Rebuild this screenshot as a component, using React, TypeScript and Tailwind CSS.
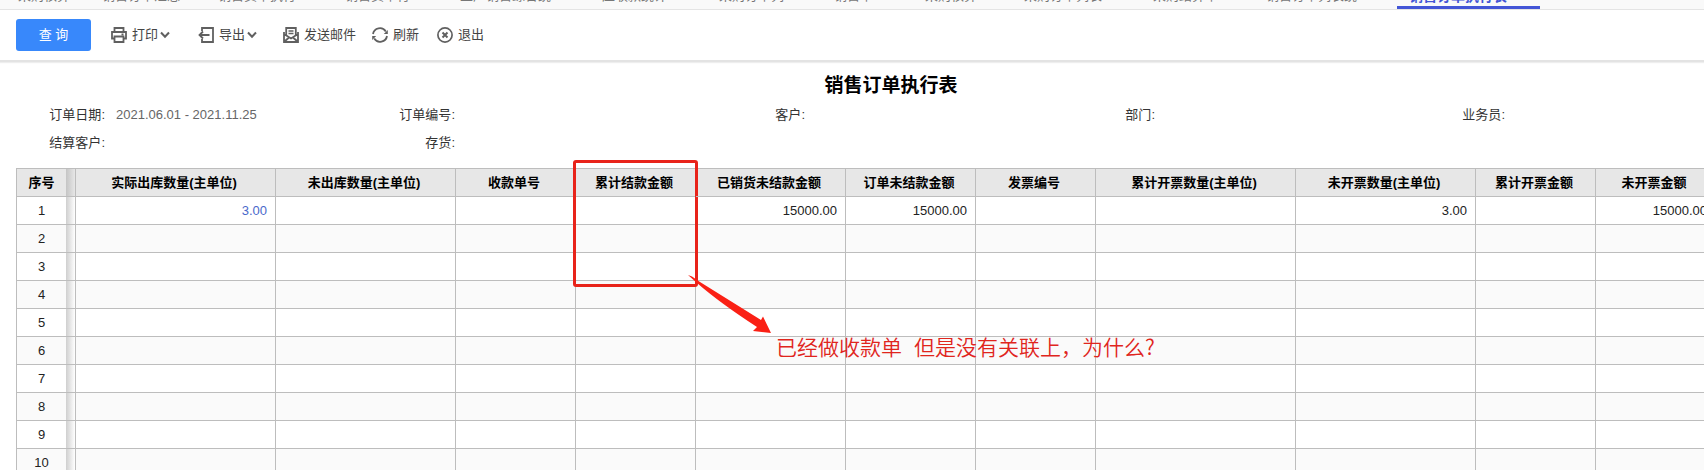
import React from "react";

const tabs = [
  { name: "采购核算 1", width: "w-[84px]" },
  { name: "销售订单汇总", width: "w-[116px]" },
  { name: "销售货单执行", width: "w-[127px]" },
  { name: "销售货单行", width: "w-[115px]" },
  { name: "生产销售综合统", width: "w-[142px]" },
  { name: "应收款统计", width: "w-[117px]" },
  { name: "采购订单列", width: "w-[115px]" },
  { name: "销售单", width: "w-[91px]" },
  { name: "采购核算", width: "w-[99px]" },
  { name: "采购订单列表", width: "w-[129px]" },
  { name: "采购结算单", width: "w-[113px]" },
  { name: "销售订单列表统", width: "w-[131px]" },
];

const columns = [
  { title: "实际出库数量(主单位)", width: "w-[200px]", value: "3.00", link: true },
  { title: "未出库数量(主单位)", width: "w-[180px]" },
  { title: "收款单号", width: "w-[120px]" },
  { title: "累计结款金额", width: "w-[120px]", marked: true },
  { title: "已销货未结款金额", width: "w-[150px]", value: "15000.00" },
  { title: "订单未结款金额", width: "w-[130px]", value: "15000.00" },
  { title: "发票编号", width: "w-[120px]" },
  { title: "累计开票数量(主单位)", width: "w-[200px]" },
  { title: "未开票数量(主单位)", width: "w-[180px]", value: "3.00" },
  { title: "累计开票金额", width: "w-[120px]" },
  { title: "未开票金额", width: "w-[120px]", value: "15000.00" },
];

const rows = [1, 2, 3, 4, 5, 6, 7, 8, 9, 10];

const Icon: React.FC<{ children: React.ReactNode }> = ({ children }) => (
  <svg viewBox="0 0 16 16" className="size-4 shrink-0" fill="none" stroke="#606060" strokeWidth="1.8">
    {children}
  </svg>
);

const Chevron = () => (
  <svg viewBox="0 0 10 8" className="ml-[2px] h-2 w-[10px]" fill="none" stroke="#606060" strokeWidth="2">
    <path d="M1 1.5 5 5.8 9 1.5" />
  </svg>
);

const ToolButton: React.FC<{ label: string; icon: React.ReactNode; menu?: boolean }> = ({ label, icon, menu }) => (
  <button className="flex items-center text-[#444]">
    <Icon>{icon}</Icon>
    <span className="ml-[5px]">{label}</span>
    {menu && <Chevron />}
  </button>
);

const Field: React.FC<{ label: string; value?: string }> = ({ label, value }) => (
  <div className="flex">
    <dt className="w-[90px] shrink-0 text-right text-[#333]">{label}:</dt>
    <dd className="ml-[11px] whitespace-nowrap text-[#666]">{value}</dd>
  </div>
);

// red box around the column, with the arrow and the question next to it
const Note = () => (
  <div className="pointer-events-none absolute -left-[3px] -top-[9px] h-[127px] w-[125px] rounded-[3px] border-3 border-[#e8231a]">
    <svg viewBox="0 0 84 60" className="absolute left-[112px] top-[112px] h-[60px] w-[84px]" fill="#fa2015">
      <path d="M0 0 L4 1.5 L12 7 L73 45 L75 41.5 L83 58 L65 56 L69 52 Q32 28 9 8 Z" />
    </svg>
    <p className="absolute left-[200px] top-[167px] flex gap-3 whitespace-nowrap font-['Noto_Sans_CJK_SC',sans-serif] text-[21px] leading-8 font-[350] text-[#e0251d]">
      <span>已经做收款单</span>
      <span>但是没有关联上，为什么?</span>
    </p>
  </div>
);

export default function App() {
  return (
    <div className="h-screen overflow-hidden bg-white font-['Liberation_Sans','Noto_Sans_CJK_SC',sans-serif] text-[13px] text-[#222]">
      <nav className="flex h-[10px] items-end overflow-hidden border-b border-[#e4e4e4] bg-[#f9f9f9] pl-[18px] leading-5 text-[#777]">
        {tabs.map((tab) => (
          <a key={tab.name} href="#" className={`${tab.width} shrink-0 whitespace-nowrap pb-[3px]`}>
            {tab.name}
          </a>
        ))}
        <a href="#" className="w-[143px] shrink-0 border-b-3 border-[#4355d6] pl-3 text-sm font-bold text-[#4355d6]">
          销售订单执行表
        </a>
      </nav>

      <header className="flex h-[52px] items-center border-b-2 border-[#e3e3e3] pl-4 pb-[1px] shadow-[0_1px_1px_#eeeeee]">
        <button className="h-8 w-[75px] rounded-[3px] bg-[#3888fb] text-white">查 询</button>
        <div className="ml-5 flex items-center">
          <div className="w-[87px]">
            <ToolButton
              label="打印"
              menu
              icon={<path d="M3.5 5V1h9v4M3.5 11.5H1V5h14v6.5h-2.5M3.5 9.5h9V15h-9zM10.5 7.3h2" />}
            />
          </div>
          <div className="w-[85px]">
            <ToolButton label="导出" menu icon={<path d="M4 4V1h11v14H4v-3M11.5 8H1.5M5 4.5 1.5 8 5 11.5" />} />
          </div>
          <div className="w-[89px]">
            <ToolButton
              label="发送邮件"
              icon={
                <>
                  <path d="M3.2 9V1h9.6v8" />
                  <path d="M1 5v10h14V5M1 7l7 4.5L15 7M1.5 14.5l4.5-4M14.5 14.5l-4.5-4" />
                  <path d="M5.5 4h5M5.5 6.5h5" strokeWidth="1.3" />
                </>
              }
            />
          </div>
          <div className="w-[65px]">
            <ToolButton
              label="刷新"
              icon={
                <>
                  <path d="M1 7a7 7 0 0 1 12.8-2.6M15 9a7 7 0 0 1-12.8 2.6" />
                  <path d="M15.8 3v4h-4zM.2 13V9h4z" fill="#606060" stroke="none" />
                </>
              }
            />
          </div>
          <ToolButton
            label="退出"
            icon={
              <>
                <circle cx="8" cy="8" r="7.1" strokeWidth="1.7" />
                <path d="m5.5 5.5 5 5M10.5 5.5l-5 5" strokeWidth="2" />
              </>
            }
          />
        </div>
      </header>

      <main>
        <h1 className="pt-[9px] pl-[78px] text-center text-[19px] leading-[30px] font-bold text-black">销售订单执行表</h1>
        <dl className="grid grid-cols-[350px_350px_350px_350px_1fr] pl-[15px] leading-7">
          <Field label="订单日期" value="2021.06.01 - 2021.11.25" />
          <Field label="订单编号" />
          <Field label="客户" />
          <Field label="部门" />
          <Field label="业务员" />
          <Field label="结算客户" />
          <Field label="存货" />
        </dl>

        <table className="mt-[11px] ml-4 w-[1700px] table-fixed border-separate border-spacing-0 border-t border-l border-[#bdbdbd]">
          <thead>
            <tr className="h-7 bg-[#e7e7e7] text-black">
              <th className="w-[49px] border-b border-[#bdbdbd] p-0 font-bold">序号</th>
              <th className="w-[10px] border-r border-b border-[#bdbdbd] bg-linear-to-r from-[#c4c4c4] to-[#e7e7e7] p-0" />
              {columns.map((col) => (
                <th key={col.title} className={`${col.width} relative border-r border-b border-[#bdbdbd] py-0 pr-[3px] pl-0 font-bold`}>
                  {col.title}
                  {col.marked && <Note />}
                </th>
              ))}
            </tr>
          </thead>
          <tbody>
            {rows.map((row) => (
              <tr key={row} className="h-7 even:bg-[#fafafa]">
                <td className="border-b border-[#bdbdbd] p-0 text-center">{row}</td>
                <td className="border-r border-b border-[#bdbdbd] bg-linear-to-r from-[#cfcfcf] to-white p-0" />
                {columns.map((col) => (
                  <td
                    key={col.title}
                    className={`border-r border-b border-[#bdbdbd] py-0 pr-2 pl-0 text-right ${col.link ? "text-[#4a69cb]" : ""}`}
                  >
                    {row === 1 && col.value}
                  </td>
                ))}
              </tr>
            ))}
          </tbody>
        </table>
      </main>
    </div>
  );
}
